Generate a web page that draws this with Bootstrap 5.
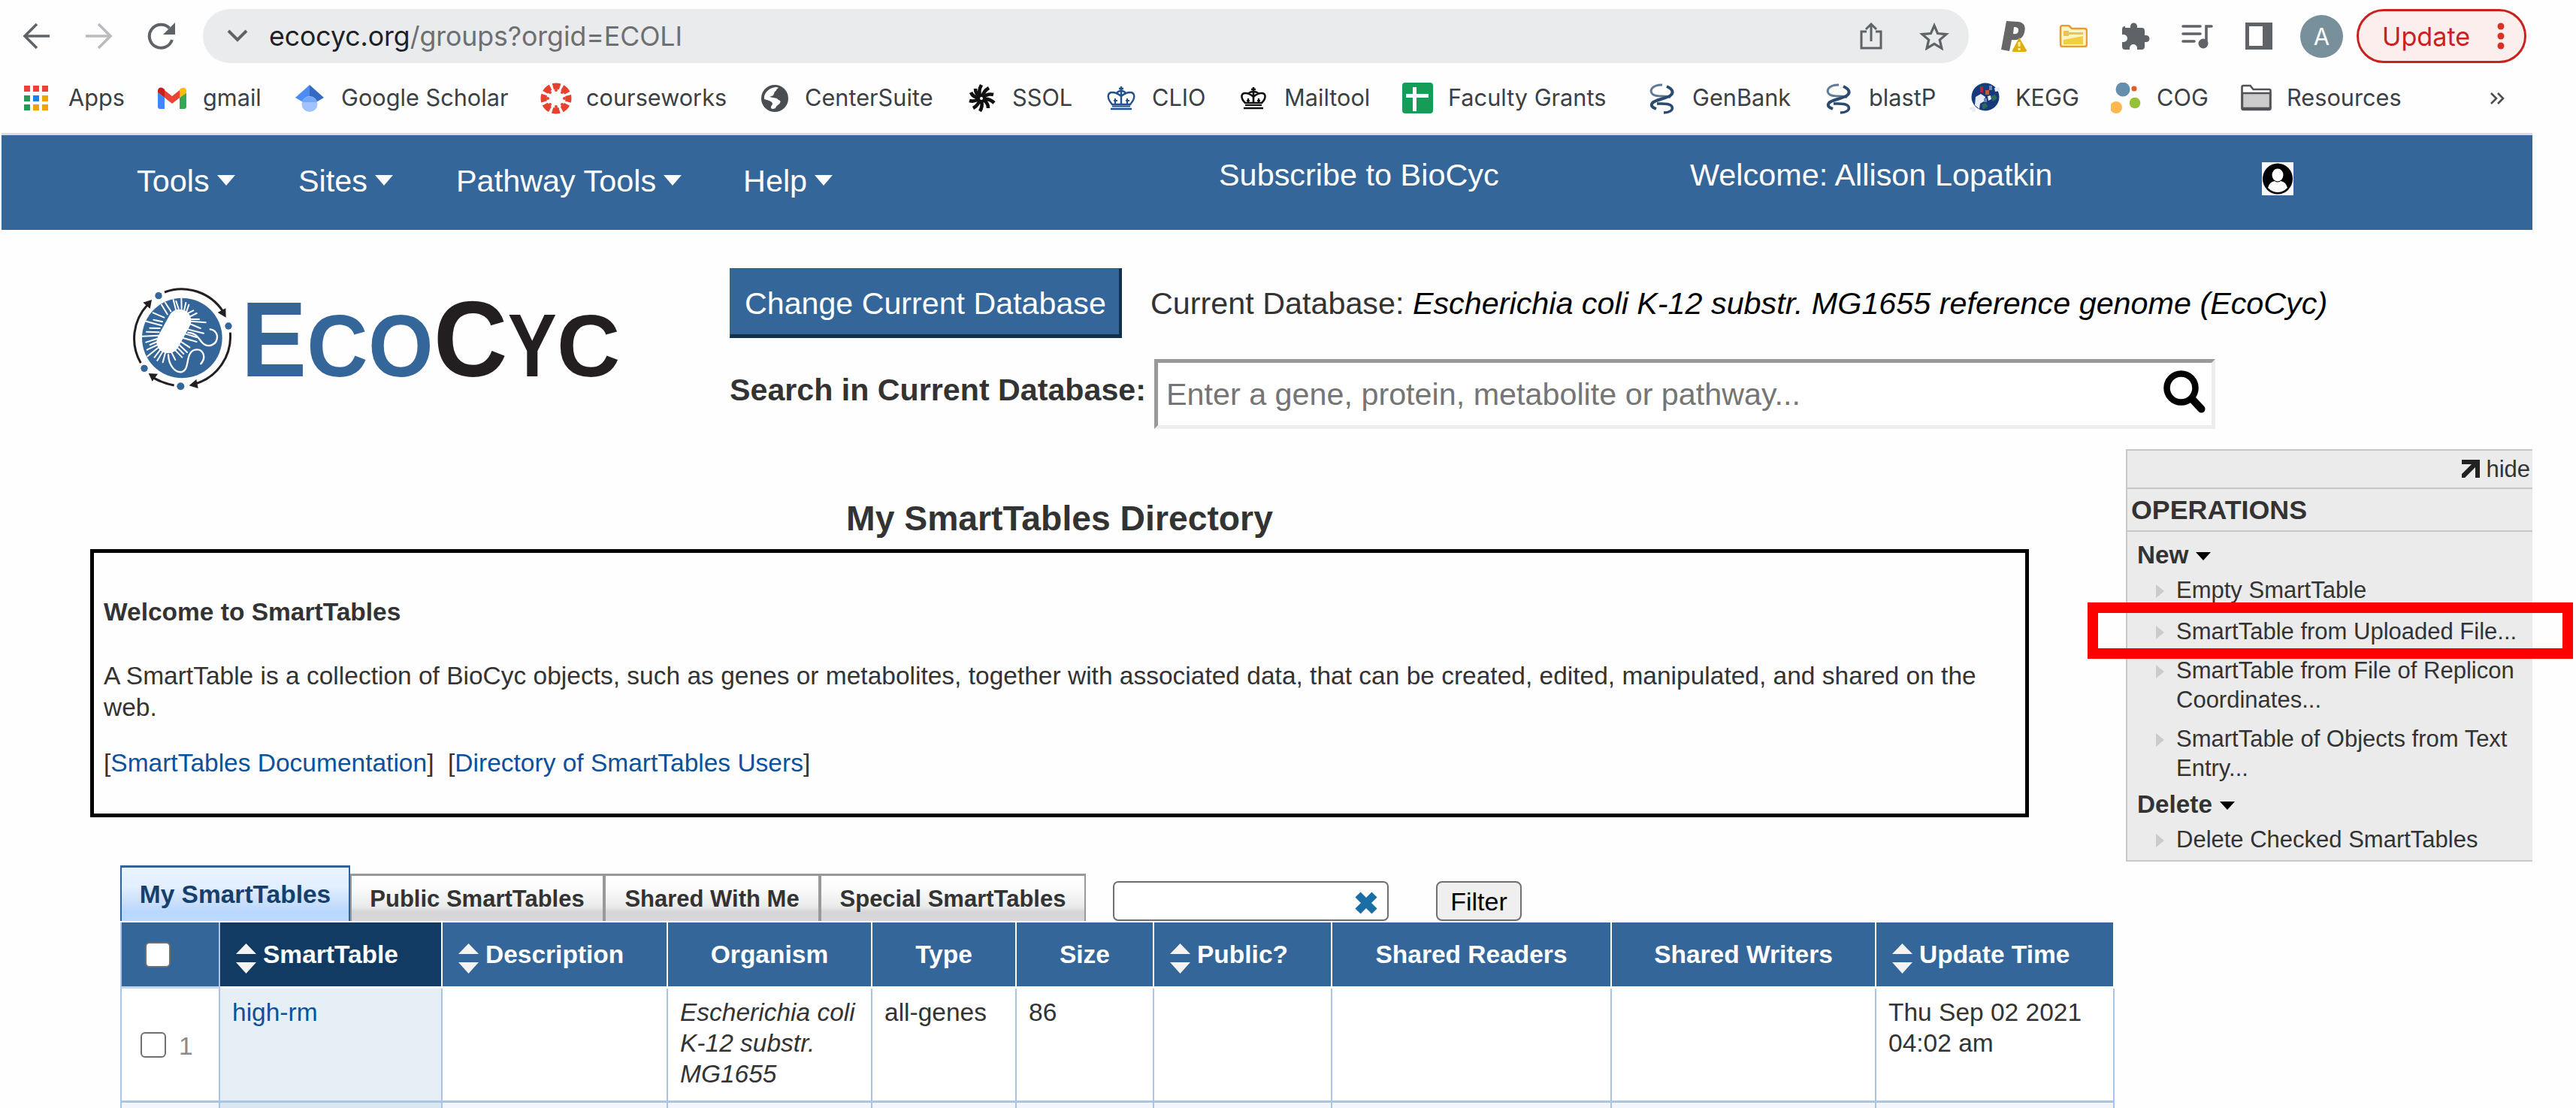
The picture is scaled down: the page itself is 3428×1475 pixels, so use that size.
<!DOCTYPE html>
<html lang="en">
<head>
<meta charset="utf-8">
<title>My SmartTables Directory</title>
<link rel="stylesheet" href="https://cdn.jsdelivr.net/npm/bootstrap@5.3.0/dist/css/bootstrap.min.css">
<script src="https://cdn.jsdelivr.net/npm/bootstrap@5.3.0/dist/js/bootstrap.bundle.min.js"></script>
<style>
html,body{height:1475px;overflow:hidden}
body{background:#fefefe;color:#333;font-family:"Liberation Sans",Arial,sans-serif;font-size:33.5px;line-height:42px}
svg{display:block;flex:none}
a{text-decoration:none;color:#0b519c}
/* browser chrome */
.chrome-ui{font-family:Inter,Roboto,sans-serif;color:#3c4043}
.toolbar-grid{height:96px;display:grid;align-items:center;grid-template-columns:83px 82px 75px 2392px 78px 83px 80px 85px 73px 75px 226px;padding-left:30px}
.omni{width:2350px;height:72px;border-radius:36px;background:#e9ebec;font-size:35.7px;letter-spacing:-.08px;color:#6d6f72;line-height:72px;padding:0 26px 0 32px}
.omni b{font-weight:400;color:#202124}
.omni .share-glyph{margin-right:49px}
.avatar-dot{width:57px;height:57px;border-radius:50%;background:#78909c;color:#fff;font-size:31px;line-height:57px;text-align:center}
.update-pill{width:226px;height:72px;border:3px solid #c8221e;border-radius:36px;background:#fceeed;color:#c8221e;font-size:34.2px;line-height:66px;padding:2px 25px 0 31px}
.marks-grid{height:81px;padding:0 0 11px 30px;display:grid;align-items:center;font-size:30.7px;line-height:38px;grid-template-columns:179px 184px 326px 291px 276px 186px 176px 218px 325px 235px 195px 188px 173px 332px 40px}
.bm{display:flex;align-items:center;gap:19px;white-space:nowrap}
.bm span{margin-top:-3px}
/* page */
.page-view{width:3368px;margin-left:2px}
.site-nav{height:128.5px;background:#346699;border-top:3px solid #dadcda;color:#fff;font-size:41.4px;line-height:50px;display:grid;align-items:start;grid-template-columns:215px 210px 382px 633px 627px 761px 60px;padding-left:180px}
.site-nav>.menu-word{padding-top:36px;display:flex;gap:10px}
.site-nav>.menu-word i{margin-top:17px;border:12px solid transparent;border-top:14px solid #fff;border-bottom:0;height:0}
.site-nav>.info-word{padding-top:28px}
.user-glyph{margin-top:36px}
.brand-row{height:265.5px}
.brand-mark{margin:69.5px 136px 0 163px;overflow:visible}
.brand-tools{padding-top:51.5px}
.big-copy{font-size:41.3px;line-height:95px;height:93px;white-space:nowrap}
.big-copy .db-label{margin-left:38px}
.big-copy .search-label{width:565px;line-height:83px;font-size:41.2px}
.big-copy+.big-copy{margin-top:28px}
.db-btn{width:522px;height:93px;background:#346699;color:#fff;border:solid;border-width:1px 4px 5px 1px;border-color:#27588d #142f49 #142f49 #346699;border-radius:0;font-size:41.2px;line-height:87px;padding:3px 0 0 19px;text-align:left}
.search-field{width:1412px;height:93px;border:5px solid;border-color:#999 #ededed #ededed #999;background:#fff;color:#757575;font-size:41.3px;line-height:85px;padding:0 8px 0 11px}
.search-field svg{margin-top:10px}
.dir-title{font-size:46.3px;line-height:56px;font-weight:700;margin:91px 0 13px;width:2580px;text-align:center}
.welcome-box{width:2580px;height:357px;border:5px solid #000;padding:58px 13px 0}
.welcome-box p{margin:43px 0 32px}
.dir-col{width:2827px;padding-left:118px}
/* tabs */
.tab-strip{height:74px;margin:64px 0 2px 40px}
.tb{height:63px;border:solid #999;border-width:3px 2px 0 2px;background:linear-gradient(#fff 0,#fbfbfb 30%,#e9eaea 68%,#d5d5d7 80%,#d8d8da);font-weight:700;font-size:31px;line-height:61px;text-align:center;color:#333}
.tb-on{height:74px;border:solid #2f6298;border-width:3px 2px 0 2px;background:linear-gradient(#e9f3ff 0,#e2efff 35%,#cbdffb 65%,#b9d8ff 82%,#bcd9ff);font-size:33.5px;line-height:71px;color:#16406b}
.filter-field{height:53px;width:367px;border:2.5px solid #6f6f6f;border-radius:7px;background:#fff;margin-left:36px}
.filter-btn{height:53px;width:114px;border:2.5px solid #707070;border-radius:8px;background:#efefef;color:#000;font-size:34px;line-height:48px;padding:0;margin-left:63px}
/* table */
.smart{table-layout:fixed;width:2654px;border-collapse:separate;border-spacing:0;margin:0 0 0 40px;color:#333}
.smart th{height:88px;background:#346699;color:#fff;padding:0;border:solid #fff;border-width:0 2px 3px 0;font-size:33.5px;line-height:42px;text-align:center;vertical-align:middle}
.smart th:first-child{border-left:2px solid #a9c4e4;border-right-color:#a9c4e4;border-bottom-color:#c3d6ee}
.smart td{height:152px;padding:11px 0 0 16px;border:solid #a9c5e6;border-width:0 2px 3px 0;line-height:41px;vertical-align:top;background:#fff}
.smart td:first-child{border-left:2px solid #a9c5e6;padding:0}
.smart td.sorted-cell{background:#e6eef6}
.smart tr.even-row td{background:#f2f6fc;height:7px;padding:0;border-bottom:0}
.smart tr.even-row td.sorted-cell{background:#dae6f2}
.smart th.sorted-cell{background:#123b64}
.sortable{display:flex;align-items:center;gap:9px;padding-left:21px}
.sortable svg{margin-top:10px}
.tick{appearance:none;display:block;width:34px;height:34px;margin:0;border:2.5px solid #6f6f6f;border-radius:6px;background:#fff}
th .tick{margin-left:31px}
.row-pick{padding-left:25px;gap:17px}
.row-no{color:#8b8b8b}
/* operations panel */
.ops{position:relative;width:541px;height:549px;margin-top:26.5px;background:#ebebeb;border:solid #c8c8c8;border-width:2.5px 0 2.5px 2.5px}
.ops-hide{height:51px;border-bottom:2.5px solid #c8c8c8;font-size:31px;line-height:50px;padding-right:3px;gap:7px}
.ops-hide svg{margin-top:12px}
.ops-head{height:57px;border-bottom:2.5px solid #c8c8c8;font-size:35.8px;line-height:56px;font-weight:700;padding-left:5px}
.ops-group{font-size:33.3px;line-height:40px;font-weight:700;padding-left:13px;gap:10px;margin-top:9px}
.ops-group i{margin-top:16px;border:10px solid transparent;border-top:11px solid #000;border-bottom:0;height:0}
.ops-head+.ops-group{margin-top:11.5px}
.ops-item{font-size:31px;line-height:38.6px;padding-left:38px;gap:16px;margin-top:13.8px}
.ops-group+.ops-item{margin-top:8px}
.ops-item.ops-upload{margin-top:16px}
.ops-item i{flex:none;margin-top:11px;border:9px solid transparent;border-left:11px solid #cbcbcb;border-right:0;width:0;height:0}
.highlight-frame{position:absolute;left:-53px;top:202px;width:646px;height:75px;border:14px solid #f00}
</style>
</head>
<body>
<header class="chrome-ui">
  <div class="toolbar-grid">
    <svg width="38" height="38" viewBox="0 0 38 38" fill="none" stroke="#5f6368" stroke-width="3.6"><path d="M36 19H4M19 3L3 19l16 16"/></svg>
    <svg width="38" height="38" viewBox="0 0 38 38" fill="none" stroke="#b9bbbe" stroke-width="3.6"><path d="M1 19h32M18 3l16 16-16 16"/></svg>
    <svg width="40" height="38" viewBox="0 0 40 38"><path d="M34 24A15.500 15.500 0 1 1 30.500 8.500" fill="none" stroke="#5f6368" stroke-width="4"/><path d="M38 1v16H22z" fill="#5f6368"/></svg>
    <div class="omni d-flex align-items-center">
      <svg width="28" height="20" viewBox="0 0 28 20" class="me-4" fill="none" stroke="#5f6368" stroke-width="4"><path d="M2 3l12 12L26 3"/></svg>
      <span class="ms-1"><b>ecocyc.org</b>/groups?orgid=ECOLI</span>
      <svg class="share-glyph ms-auto" width="30" height="38" viewBox="0 0 30 38" fill="none" stroke="#5f6368" stroke-width="3"><path d="M9 13H2v22h26V13h-7M15 26V3M8 10l7-7 7 7"/></svg>
      <svg width="40" height="38" viewBox="0 0 40 38" fill="none" stroke="#5f6368" stroke-width="3.200"><path d="M20 5l4.600 10.600 11.400 1-8.700 7.500 2.600 11.200L20 29.300l-9.900 6 2.600-11.200L4 16.600l11.400-1z"/></svg>
    </div>
    <svg width="36" height="42" viewBox="0 0 36 42"><path fill="#666" fill-rule="evenodd" d="M8 1l16 1c8 1 10 7 8 14-2 8-7 11-17 10l-3 15-11-2zM18 9l-1 9c6 1 7-2 7-5 0-3-2-4-6-4z"/><path fill="#dfae08" d="M25 23l10 17c0 1-1 2-2 2H17c-1 0-2-1-1-2z"/><path stroke="#fff3a0" stroke-width="3" d="M25 29v6m0 2v3"/></svg>
    <svg width="38" height="30" viewBox="0 0 38 30"><path d="M2 4q0-3 3-3h8l4 4h17q3 0 3 3v18q0 3-3 3H5q-3 0-3-3z" fill="#fff4c4" stroke="#e99a35" stroke-width="2.500"/><path d="M6 20l26-5v11H6z" fill="#f2cf3f"/><path d="M6 8h7v2h19v3H13v2H6z" fill="#eec251"/></svg>
    <svg width="38" height="38" viewBox="0 0 38 38"><path fill="#5f6368" d="M5 8h7V6a4.500 4.500 0 0 1 9 0v2h6q4 0 4 4v6h2a4.500 4.500 0 0 1 0 9h-2v6q0 4-4 4h-6v-2a5 5 0 0 0-10 0v2H5q-4 0-4-4v-6h2a5 5 0 0 0 0-10H1v-7q0-4 4-4z"/></svg>
    <svg width="42" height="34" viewBox="0 0 42 34"><path fill="none" stroke="#5f6368" stroke-width="3.600" stroke-linecap="round" d="M2 4h23M2 14h23M2 24h15M40 4h-7v22"/><circle cx="29" cy="27" r="6.500" fill="#5f6368"/></svg>
    <svg width="37" height="37" viewBox="0 0 37 37"><path fill="#5f6368" fill-rule="evenodd" d="M0 0h36v36H0zM5 5v26h18V5z"/></svg>
    <div class="avatar-dot">A</div>
    <div class="update-pill d-flex justify-content-between align-items-center"><span>Update</span>
      <svg width="12" height="38" viewBox="0 0 12 38" fill="#d93025"><circle cx="6" cy="5" r="4.500"/><circle cx="6" cy="18" r="4.500"/><circle cx="6" cy="31" r="4.500"/></svg></div>
  </div>
  <nav class="marks-grid">
    <div class="bm"><svg width="42" height="42" viewBox="0 0 42 42"><path fill="#ef4034" d="M2 4h8v8H2zM14 4h8v8h-8zM26 4h8v8h-8z"/><path fill="#239b56" d="M2 17h8v8H2zM2 29h8v8H2z"/><path fill="#1a82e8" d="M14 17h8v8h-8z"/><path fill="#f2a30b" d="M26 17h8v8h-8zM14 29h8v8h-8zM26 29h8v8h-8z"/></svg><span>Apps</span></div>
    <div class="bm"><svg width="42" height="42" viewBox="0 0 42 42"><path fill="#4285f4" d="M1 13l9 7v15H4q-3 0-3-3z"/><path fill="#34a853" d="M30 20l9-7v19q0 3-3 3h-6z"/><path fill="#ea4335" d="M10 10l10 8 10-8v10l-10 8-10-8z"/><path fill="#c5221f" d="M1 11c0-5 5-6 9-2v11l-9-7z"/><path fill="#fbbc04" d="M30 9c5-4 9-2 9 2v3l-9 6z"/></svg><span>gmail</span></div>
    <div class="bm"><svg width="42" height="42" viewBox="0 0 42 42"><path fill="#4c8bf5" d="M19 3v28L0 20z"/><path fill="#356ac3" d="M19 3l19 17-19 11z"/><circle cx="19" cy="28.500" r="10.500" fill="#a0c3ff"/><path fill="#76a7fa" d="M9 26a10.500 10.500 0 0 1 20 0z"/></svg><span>Google Scholar</span></div>
    <div class="bm"><svg width="42" height="42" viewBox="0 0 42 42"><circle cx="21" cy="21" r="16.500" fill="none" stroke="#e8402f" stroke-width="8" stroke-dasharray="9.600 3.360" stroke-dashoffset="4.800"/><g fill="#e8402f"><circle cx="21" cy="10" r="2"/><circle cx="21" cy="32" r="2"/><circle cx="10" cy="21" r="2"/><circle cx="32" cy="21" r="2"/><circle cx="13" cy="13" r="2"/><circle cx="29" cy="13" r="2"/><circle cx="13" cy="29" r="2"/><circle cx="29" cy="29" r="2"/></g></svg><span>courseworks</span></div>
    <div class="bm"><svg width="42" height="42" viewBox="0 0 42 42"><circle cx="21" cy="21" r="18" fill="#4a4d51"/><path fill="#fff" d="M22 6c2 0 3 0 4 1-4 2-2 4-5 5l-2 5-5 2 10 2c2 3 6 2 4 6-2 3-3 2-5 5-1 3-5 4-7 2-1-4 4-4 1-8-4-3-7-3-10-4C6 14 13 7 22 6z"/></svg><span>CenterSuite</span></div>
    <div class="bm"><svg width="42" height="42" viewBox="0 0 42 42"><g stroke="#111" stroke-width="4.600" fill="none"><path d="M19 19q-4-7 1-16M21 19q2-8 9-12M22 20q6-6 14-4M23 22q8-1 14 5M22 23q7 3 7 11M20 24q2 8-2 14M18 23q-3 8-9 11M17 21q-6 5-13 3M17 20q-8 0-11-7M18 19q-6-4-6-11"/></g><circle cx="20" cy="21" r="5" fill="#111"/><circle cx="20" cy="21" r="2" fill="#fff"/></svg><span>SSOL</span></div>
    <div class="bm"><svg width="42" height="42" viewBox="0 0 42 42" fill="none" stroke="#23508f" stroke-width="2.400"><path d="M8 29C0 20 2 13 8 13q6 0 12 5 6-5 12-5c6 0 8 7 0 16zM14 14q2-3 6-3t6 3M20 28V5M17 8h6M6 35h28"/><path d="M8 31.500h24M12 21v7m-2-4h5m13-3v7m-2-4h5" stroke-width="2"/></svg><span>CLIO</span></div>
    <div class="bm"><svg width="42" height="42" viewBox="0 0 42 42" fill="none" stroke="#111" stroke-width="2.600"><path d="M9 27C2 20 4 14 9 14q6 0 11 5 5-5 11-5c5 0 7 6 0 13zM14 14q2-2 6-2t6 2M20 27V6M17 9h6M7 34h26"/><path d="M9 30h22M13 21v6m-2-3h4m12-3v6m-2-3h4" stroke-width="2.200"/></svg><span>Mailtool</span></div>
    <div class="bm"><svg width="42" height="42" viewBox="0 0 42 42"><rect width="41" height="41" rx="4" fill="#159c58"/><path fill="#fff" d="M14 6h5v9h16v5H19v18h-5V20H5v-5h9z"/></svg><span>Faculty Grants</span></div>
    <div class="bm"><svg width="42" height="42" viewBox="0 0 42 42" fill="none"><path d="M21 3C6 3 3 12 9 16s18 0 23 4" stroke="#5f7a96" stroke-width="3"/><path d="M27 5c9 4 9 9 5 12-5 4-21 6-24 10s0 6 5 8" stroke="#2b4a72" stroke-width="4"/><path d="M14 28c8 0 18-1 20 4s-4 8-11 8" stroke="#2b4a72" stroke-width="3.400"/></svg><span>GenBank</span></div>
    <div class="bm"><svg width="42" height="42" viewBox="0 0 42 42" fill="none"><path d="M21 3C6 3 3 12 9 16s18 0 23 4" stroke="#5f7a96" stroke-width="3"/><path d="M27 5c9 4 9 9 5 12-5 4-21 6-24 10s0 6 5 8" stroke="#2b4a72" stroke-width="4"/><path d="M14 28c8 0 18-1 20 4s-4 8-11 8" stroke="#2b4a72" stroke-width="3.400"/></svg><span>blastP</span></div>
    <div class="bm"><svg width="42" height="42" viewBox="0 0 42 42"><circle cx="21" cy="19" r="18.500" fill="#173a7c"/><path fill="#e8edf5" d="M8 19l7-4 6 4-2 6-5 3-1 7-6-5zM0 33h8v6H3v-3H0zM33 7l7-1v5l-6 1zM24 18l4-1 1 5-4 2z"/><path fill="#b3223a" d="M14 5h4v8h-4z"/><path fill="#c85a32" d="M21 10h5v6h-5z"/><path fill="#2b6b57" d="M28 18l6-2 3 5-6 4zM16 29l6-2 2 5-6 4z"/><path fill="#6d87b8" d="M19 21h4v5h-4zM26 4h4v6h-4z"/></svg><span>KEGG</span></div>
    <div class="bm"><svg width="42" height="42" viewBox="0 0 42 42"><circle cx="16" cy="9" r="9.500" fill="#658fad"/><circle cx="31" cy="8" r="3.600" fill="#dd5f26"/><circle cx="32" cy="27" r="7.300" fill="#96bf3a"/><circle cx="7" cy="33" r="8" fill="#ffb74f"/></svg><span>COG</span></div>
    <div class="bm"><svg width="42" height="42" viewBox="0 0 42 42"><path d="M1.500 34V6q0-2 2-2h9l4 5h21q2 0 2 2v23q0 2-2 2h-34q-2 0-2-2z" fill="#fff" stroke="#505255" stroke-width="2.600"/><path d="M2 14h37v20H2z" fill="#ccc" stroke="#505255" stroke-width="2.400"/></svg><span>Resources</span></div>
    <div class="bm"><svg width="20" height="16" viewBox="0 0 20 16" fill="none" stroke="#4a4d51" stroke-width="2.600"><path d="M1 1l7 7-7 7M10 1l7 7-7 7"/></svg></div>
  </nav>
</header>

<div class="page-view">
  <nav class="site-nav">
    <div class="menu-word">Tools<i></i></div>
    <div class="menu-word">Sites<i></i></div>
    <div class="menu-word">Pathway Tools<i></i></div>
    <div class="menu-word">Help<i></i></div>
    <div class="info-word">Subscribe to BioCyc</div>
    <div class="info-word">Welcome: Allison Lopatkin</div>
    <svg class="user-glyph" width="42" height="44" viewBox="0 0 42 44"><path fill="#f8f8f8" d="M0 0h42v44H0z"/><ellipse cx="21" cy="22" rx="20" ry="20.500" fill="#000"/><ellipse cx="21" cy="17" rx="7.500" ry="8.500" fill="#fff"/><path fill="#fff" d="M8 34q2-8 9-9 4 3 8 0 7 1 9 9-6 6-13 6T8 34z"/></svg>
  </nav>

  <section class="brand-row d-flex">
    <svg class="brand-mark" width="670" height="155" viewBox="0 0 2010 465">
      <circle cx="232" cy="225" r="160" fill="#346699"/>
      <path d="M222 156L176 240" stroke="#fff" stroke-width="92" stroke-linecap="round"/>
      <g stroke="#fff" stroke-width="6" stroke-linecap="round">
        <path d="M173 130L150 92M187 118L165 84M207 112L197 72M218 108L208 78M230 108L229 66M241 112L247 84M250 118L259 92M255 126L277 115M262 140L290 126M264 150L300 150M264 158L326 163M262 168L305 186M160 143L116 124M153 160L118 152M150 175L88 158M143 186L103 185M140 202L90 200M136 215L74 218M132 228L88 242M132 240L104 252M134 252L92 272M136 264L94 298M145 272L122 302M155 278L133 315M165 284L155 322M190 283L205 312M203 272L232 302M210 260L238 288M218 250L252 282M225 238L262 262M234 224L290 240M244 208L290 222M254 190L318 206"/>
      </g>
      <g fill="none" stroke="#fff" stroke-width="7" stroke-linecap="round"><path d="M256 203C292 206 296 226 312 243C336 268 374 252 372 216C370 202 356 190 344 190"/><path d="M177 292C178 330 202 366 232 360C264 350 244 286 280 273C312 262 332 298 307 328"/></g>
      <g fill="#346699"><circle cx="138" cy="56" r="14"/><circle cx="417" cy="177" r="14"/><circle cx="81" cy="346" r="14"/><circle cx="226" cy="418" r="15"/></g>
      <g fill="none" stroke="#231f20" stroke-width="9"><path d="M162 42A197 197 0 0 1 396 120M424 203A197 197 0 0 1 284 408M200 414Q154 405 120 385M67 325A197 197 0 0 1 94 92"/></g>
      <path fill="#231f20" d="M407 143L374 123L406 106ZM260 415L289 390L296 426ZM98 366L135 368L113 398ZM111 72L76 83L104 108Z"/>
      <g font-family="Liberation Sans,Arial,sans-serif" font-weight="700"><g fill="#346699"><text x="467" y="378" font-size="430" textLength="262" lengthAdjust="spacingAndGlyphs">E</text><text x="730" y="378" font-size="350" textLength="244" lengthAdjust="spacingAndGlyphs">C</text><text x="975" y="378" font-size="350" textLength="260" lengthAdjust="spacingAndGlyphs">O</text></g>
      <g fill="#231f20"><text x="1236" y="378" font-size="430" textLength="295" lengthAdjust="spacingAndGlyphs">C</text><text x="1532" y="378" font-size="357" textLength="195" lengthAdjust="spacingAndGlyphs">Y</text><text x="1728" y="378" font-size="350">C</text></g></g>
    </svg>
    <div class="brand-tools">
      <div class="d-flex big-copy"><button class="btn db-btn">Change Current Database</button><span class="db-label">Current Database: <em class="text-black">Escherichia coli K-12 substr. MG1655 reference genome (EcoCyc)</em></span></div>
      <div class="d-flex big-copy"><b class="search-label">Search in Current Database:</b>
        <div class="search-field d-flex justify-content-between"><span>Enter a gene, protein, metabolite or pathway...</span>
          <svg width="56" height="57" viewBox="0 0 56 57" fill="none" stroke="#000"><circle cx="23.500" cy="23.500" r="19" stroke-width="8.500"/><path d="M38 38l12.500 13.500" stroke-width="10" stroke-linecap="round"/></svg></div></div>
    </div>
  </section>

  <main class="d-flex align-items-start">
    <div class="dir-col flex-shrink-0">
      <h1 class="dir-title">My SmartTables Directory</h1>
      <div class="welcome-box">
        <b>Welcome to SmartTables</b>
        <p>A SmartTable is a collection of BioCyc objects, such as genes or metabolites, together with associated data, that can be created, edited, manipulated, and shared on the web.</p>
        <div>[<a href="#">SmartTables Documentation</a>]&nbsp; [<a href="#">Directory of SmartTables Users</a>]</div>
      </div>
      <div class="tab-strip d-flex align-items-end">
        <div class="tb tb-on" style="width:306px">My SmartTables</div>
        <div class="tb" style="width:338px">Public SmartTables</div>
        <div class="tb" style="width:287px">Shared With Me</div>
        <div class="tb" style="width:354px">Special SmartTables</div>
        <div class="filter-field d-flex justify-content-end align-items-center pe-2"><svg class="mt-1 me-1" width="32" height="32" viewBox="0 0 32 32"><path d="M5 5l22 22M27 5L5 27" stroke="#1a6ea5" stroke-width="10"/></svg></div>
        <button class="btn filter-btn">Filter</button>
      </div>
      <table class="smart">
        <colgroup><col style="width:133px"><col style="width:296px"><col style="width:300px"><col style="width:272px"><col style="width:192px"><col style="width:183px"><col style="width:237px"><col style="width:372px"><col style="width:352px"><col style="width:317px"></colgroup>
        <thead><tr>
          <th><input type="checkbox" class="tick"></th>
          <th class="sorted-cell"><div class="sortable"><svg width="27" height="40" viewBox="0 0 27 40" fill="#f4f4f4"><path d="M13.500 0L27 14H0zM13.500 40L0 25h27z"/></svg>SmartTable</div></th>
          <th><div class="sortable"><svg width="27" height="40" viewBox="0 0 27 40" fill="#f4f4f4"><path d="M13.500 0L27 14H0zM13.500 40L0 25h27z"/></svg>Description</div></th>
          <th>Organism</th><th>Type</th><th>Size</th>
          <th><div class="sortable"><svg width="27" height="40" viewBox="0 0 27 40" fill="#f4f4f4"><path d="M13.500 0L27 14H0zM13.500 40L0 25h27z"/></svg>Public?</div></th>
          <th>Shared Readers</th><th>Shared Writers</th>
          <th><div class="sortable"><svg width="27" height="40" viewBox="0 0 27 40" fill="#f4f4f4"><path d="M13.500 0L27 14H0zM13.500 40L0 25h27z"/></svg>Update Time</div></th>
        </tr></thead>
        <tbody>
          <tr><td class="align-middle"><div class="row-pick d-flex align-items-center"><input type="checkbox" class="tick"><span class="row-no pt-1">1</span></div></td>
            <td class="sorted-cell"><a href="#">high-rm</a></td><td></td><td><em>Escherichia coli<br>K-12 substr.<br>MG1655</em></td><td>all-genes</td><td>86</td><td></td><td></td><td></td><td>Thu Sep 02 2021<br>04:02 am</td></tr>
          <tr class="even-row"><td></td><td class="sorted-cell"></td><td></td><td></td><td></td><td></td><td></td><td></td><td></td><td></td></tr>
        </tbody>
      </table>
    </div>

    <aside class="ops flex-shrink-0">
      <div class="ops-hide d-flex justify-content-end align-items-start"><svg width="26" height="24" viewBox="0 0 26 24"><path d="M1 0h24v24h-6V10L5 24H1v-5L14 6H1z" fill="#222"/></svg><span>hide</span></div>
      <div class="ops-head">OPERATIONS</div>
      <div class="ops-group d-flex">New<i></i></div>
      <div class="ops-item d-flex"><i></i><span>Empty SmartTable</span></div>
      <div class="ops-item ops-upload d-flex"><i></i><span>SmartTable from Uploaded File...</span></div>
      <div class="ops-item d-flex"><i></i><span>SmartTable from File of Replicon Coordinates...</span></div>
      <div class="ops-item d-flex"><i></i><span>SmartTable of Objects from Text Entry...</span></div>
      <div class="ops-group d-flex">Delete<i></i></div>
      <div class="ops-item d-flex"><i></i><span>Delete Checked SmartTables</span></div>
      <div class="highlight-frame"></div>
    </aside>
  </main>
</div>
</body>
</html>
